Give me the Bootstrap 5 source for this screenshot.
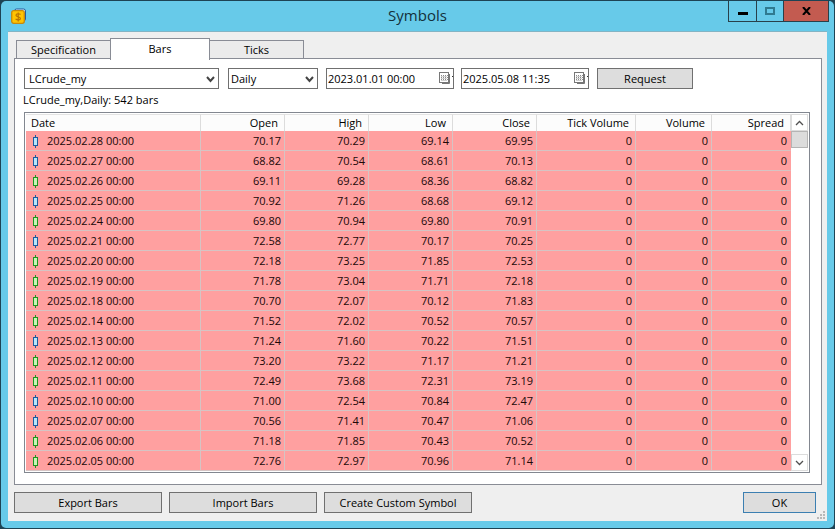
<!DOCTYPE html>
<html lang="en">
<head>
<meta charset="utf-8">
<meta name="viewport" content="width=device-width, initial-scale=1">
<title>Symbols</title>
<link rel="stylesheet" href="https://cdn.jsdelivr.net/npm/bootstrap@5.3.0/dist/css/bootstrap.min.css">
<style>
  body { background: #1d4354; font-family: "Open Sans", "Noto Sans", sans-serif; font-size: 11px; line-height: 14px; color: #000; }
  button, input, select { font-size: 11px; line-height: 14px; color: #000; }
  .shell { min-height: 100vh; padding: 1px; background: #1d4354; }
  .win { background: #67cae9; border-radius: 5px; padding: 0 7px 7px; }
  .titlebar { display: grid; grid-template-columns: 1fr auto 1fr; height: 30px; }
  .titlebar h1 { font-size: 15px; line-height: 28px; color: #13303b; font-weight: 400; }
  .app-icon { margin: 7px 0 0 3px; }
  .winctl { width: 28px; height: 21px; padding: 0; border: 1px solid #28404a; border-top: 0; border-right: 0; background: transparent; border-radius: 0; display: flex; align-items: center; justify-content: center; }
  .winctl.zoomer { width: 27px; }
  .winctl.shut { width: 46px; background: #c35b50; border-right: 1px solid #28404a; }
  .ctls { margin-right: -2px; }
  .client { background: #efefef; border-top: 1px solid #83b4c4; padding: 6px 5px 7px 6px; }
  .tabs { height: 21px; padding-left: 2px; border: 0; }
  .tabs .nav-link { border: 1px solid #898c95; border-bottom: 0; border-radius: 0; background: #ebebeb; color: #000; padding: 0; width: 95px; height: 18px; margin: 0 0 1px; line-height: 17px; }
  .tabs .nav-link.active { width: 100px; height: 22px; margin: 0 -1px -1px; background: #fff; border-color: #898c95; line-height: 20px; padding-bottom: 2px; position: relative; z-index: 1; }
  .panel { background: #fff; border: 1px solid #898c95; padding: 9px 11px 11px 9px; margin-top: -1px; }
  .ctl { height: 21px; border: 1px solid #707070; border-radius: 0; background: #fff; }
  .w-symbol { width: 195px; margin-right: 1px; }
  .w-period { width: 90px; }
  .w-date { width: 128px; }
  .controls { gap: 8px 8px; }
  .combo { position: relative; }
  .combo select { appearance: none; width: 100%; padding: 0 20px 0 4px; }
  .combo.w-period select { padding-left: 2px; }
  .combo svg { position: absolute; right: 4px; top: 8px; pointer-events: none; }
  .datebox input { border: 0; padding: 0 0 0 1px; min-width: 0; outline: 0; }
  .datebox button { border: 0; background: none; padding: 0; }
  .daterange { gap: 7px; }
  .pushbtn { height: 21px; border: 1px solid #707070; border-radius: 0; background: #dddddd; padding: 0 4px; font-size: 11px; line-height: 14px; color: #000; }
  .w-request { width: 96px; }
  .w-action { width: 148px; }
  .w-ok { width: 73px; border-color: #3c7fb1; }
  .summary { margin: 4px 0 5px -1px; }
  .listview { border: 1px solid #828790; padding: 1px; }
  .bars { table-layout: fixed; border-collapse: separate; border-spacing: 0; width: 100%; }
  .bars th { height: 17px; padding: 0 6px 0 5px; font-weight: 400; text-align: right; background: #fcfcfc; border-top: 1px solid #e3e3e3; border-right: 1px solid #dcdcdc; }
  .bars td { height: 20px; padding: 1px 3px 0 5px; text-align: right; background: #ffa0a0; border-bottom: 1px solid #d6c4c4; border-right: 1px solid #d6c4c4; color: #200808; white-space: nowrap; }
  .bars th:first-child, .bars td:first-child { text-align: left; }
  .bars td:last-child { border-right-color: #ffa0a0; }
  .bars .candle { margin: 0 8px 0 2px; vertical-align: middle; }
  .scroller { width: 17px; flex: none; }
  .scroller button { height: 17px; padding: 0; border: 1px solid #dcdcdc; background: #fff; display: flex; align-items: center; justify-content: center; }
  .scroller .thumb { height: 17px; background: #dcdcdc; border: 1px solid #b4b4b4; }
  .actions { gap: 7px; padding: 7px 6px 1px 0; }
  .grip { position: absolute; right: 2px; bottom: 2px; }
</style>
<script src="https://cdn.jsdelivr.net/npm/bootstrap@5.3.0/dist/js/bootstrap.bundle.min.js"></script>
</head>
<body>
<svg class="d-none" aria-hidden="true">
  <symbol id="calendar" viewBox="0 0 14 13">
    <path d="M3 11.500h7.500V2" fill="none" stroke="#777"/>
    <rect x=".5" y=".5" width="9" height="10" fill="#fff" stroke="#777"/>
    <path d="M2 3.500h7M2 5.500h7M2 7.500h7" stroke="#8c8c8c" stroke-dasharray="1 1" fill="none"/>
    <path d="M2 4.500h6M2 6.500h6M2 8.500h6" stroke="#d0d0d0" fill="none"/>
    <path d="M13.500 4v1" stroke="#333"/>
  </symbol>
</svg>
<div class="shell d-flex flex-column">
<main class="win d-flex flex-column flex-fill">
  <header class="titlebar">
    <svg class="app-icon" width="16" height="16" viewBox="0 0 16 16" aria-hidden="true">
      <rect x="3.500" y="1" width="11" height="12" rx="2" fill="#d8effa" stroke="#285c9c"/>
      <rect x=".7" y="2.700" width="12.600" height="12.600" rx="2" fill="#ffc400" stroke="#c98908" stroke-width="1.300"/>
      <path d="M9.500 6.500C8.500 5.500 5 5.300 5 7.200c0 1.900 4.400 1.200 4.400 3.200 0 1.800-3.200 1.800-4.800.6M7.200 4.500v9" fill="none" stroke="#b87400" stroke-width="1.200"/>
    </svg>
    <h1 class="m-0">Symbols</h1>
    <div class="ctls d-flex justify-content-end">
      <button class="winctl" type="button" aria-label="Minimize"><svg width="10" height="10"><path d="M0 7.500h10" stroke="#000" stroke-width="3"/></svg></button>
      <button class="winctl zoomer" type="button" aria-label="Maximize" disabled><svg width="10" height="8"><rect x="1" y="1" width="8" height="6" fill="none" stroke="#2f7a90" stroke-width="2"/></svg></button>
      <button class="winctl shut" type="button" aria-label="Close"><svg width="9" height="8"><path d="M1 0l7 8M8 0L1 8" stroke="#000" stroke-width="2"/></svg></button>
    </div>
  </header>
  <div class="client position-relative flex-fill">
    <div class="tabs nav nav-tabs align-items-end" role="tablist">
      <button class="nav-link" type="button" role="tab" aria-selected="false">Specification</button>
      <button class="nav-link active" type="button" role="tab" aria-selected="true">Bars</button>
      <button class="nav-link" type="button" role="tab" aria-selected="false">Ticks</button>
    </div>
    <section class="panel">
      <div class="controls d-flex flex-wrap">
        <div class="combo w-symbol">
          <select class="ctl" aria-label="Symbol"><option>LCrude_my</option></select>
          <svg width="9" height="7"><path d="M1 1l3.500 4L8 1" fill="none" stroke="#444" stroke-width="2"/></svg>
        </div>
        <div class="combo w-period">
          <select class="ctl" aria-label="Period"><option>Daily</option></select>
          <svg width="9" height="7"><path d="M1 1l3.500 4L8 1" fill="none" stroke="#444" stroke-width="2"/></svg>
        </div>
        <div class="daterange d-flex">
          <div class="datebox ctl w-date d-flex align-items-center">
            <input class="flex-fill" type="text" value="2023.01.01 00:00" aria-label="From">
            <button type="button" aria-label="Pick start date" class="d-flex"><svg width="14" height="13"><use href="#calendar"/></svg></button>
          </div>
          <div class="datebox ctl w-date d-flex align-items-center">
            <input class="flex-fill" type="text" value="2025.05.08 11:35" aria-label="To">
            <button type="button" aria-label="Pick end date" class="d-flex"><svg width="14" height="13"><use href="#calendar"/></svg></button>
          </div>
        </div>
        <button class="pushbtn w-request" type="button">Request</button>
      </div>
      <p class="summary">LCrude_my,Daily: 542 bars</p>
      <div class="listview d-flex">
        <table class="bars">
          <colgroup><col style="width:175px"><col style="width:84px"><col style="width:84px"><col style="width:84px"><col style="width:84px"><col style="width:99px"><col style="width:76px"><col style="width:79px"></colgroup>
          <thead><tr><th>Date</th><th>Open</th><th>High</th><th>Low</th><th>Close</th><th>Tick Volume</th><th>Volume</th><th>Spread</th></tr></thead>
          <tbody id="rows"></tbody>
        </table>
        <div class="scroller d-flex flex-column">
          <button type="button" aria-label="Scroll up"><svg width="9" height="6"><path d="M1 5l3.500-3.500L8 5" fill="none" stroke="#505050" stroke-width="1.300"/></svg></button>
          <div class="thumb"></div>
          <button type="button" class="mt-auto" aria-label="Scroll down"><svg width="9" height="6"><path d="M1 1l3.500 3.500L8 1" fill="none" stroke="#505050" stroke-width="1.300"/></svg></button>
        </div>
      </div>
    </section>
    <footer class="actions d-flex">
      <button class="pushbtn w-action" type="button">Export Bars</button>
      <button class="pushbtn w-action" type="button">Import Bars</button>
      <button class="pushbtn w-action" type="button">Create Custom Symbol</button>
      <button class="pushbtn w-ok ms-auto" type="button">OK</button>
    </footer>
    <svg class="grip" width="8" height="8" fill="#b8b8b8" aria-hidden="true"><path d="M6 0h2v2H6zM3 3h2v2H3zM6 3h2v2H6zM0 6h2v2H0zM3 6h2v2H3zM6 6h2v2H6z"/></svg>
  </div>
</main>
</div>
<script>
  // date, open, high, low, close, candle colour (b = blue, g = green)
  const bars = [
    ["02.28", "70.17", "70.29", "69.14", "69.95", "b"],
    ["02.27", "68.82", "70.54", "68.61", "70.13", "b"],
    ["02.26", "69.11", "69.28", "68.36", "68.82", "g"],
    ["02.25", "70.92", "71.26", "68.68", "69.12", "b"],
    ["02.24", "69.80", "70.94", "69.80", "70.91", "g"],
    ["02.21", "72.58", "72.77", "70.17", "70.25", "b"],
    ["02.20", "72.18", "73.25", "71.85", "72.53", "g"],
    ["02.19", "71.78", "73.04", "71.71", "72.18", "g"],
    ["02.18", "70.70", "72.07", "70.12", "71.83", "g"],
    ["02.14", "71.52", "72.02", "70.52", "70.57", "g"],
    ["02.13", "71.24", "71.60", "70.22", "71.51", "b"],
    ["02.12", "73.20", "73.22", "71.17", "71.21", "g"],
    ["02.11", "72.49", "73.68", "72.31", "73.19", "g"],
    ["02.10", "71.00", "72.54", "70.84", "72.47", "b"],
    ["02.07", "70.56", "71.41", "70.47", "71.06", "b"],
    ["02.06", "71.18", "71.85", "70.43", "70.52", "g"],
    ["02.05", "72.76", "72.97", "70.96", "71.14", "g"]
  ];
  const tone = { b: ["#1c5a9f", "#b5e6fb"], g: ["#1f961f", "#c8f7b4"] };
  document.getElementById("rows").innerHTML = bars.map(([d, o, h, l, c, k]) =>
    `<tr><td><svg class="candle" width="6" height="13" viewBox="0 0 6 13"><path d="M2.500 0v13" stroke="${tone[k][0]}"/><rect x=".5" y="2.500" width="4" height="8" fill="${tone[k][1]}" stroke="${tone[k][0]}"/></svg>2025.${d} 00:00</td>` +
    [o, h, l, c, 0, 0, 0].map(v => `<td>${v}</td>`).join("") + "</tr>").join("");
</script>
</body>
</html>
